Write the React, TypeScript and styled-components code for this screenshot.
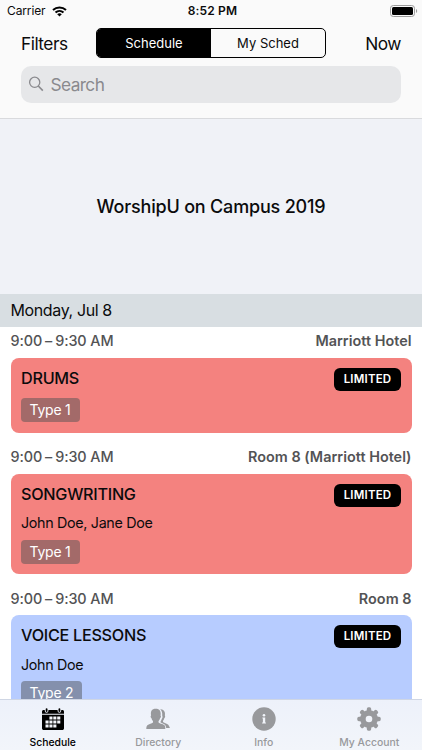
import React from 'react';
import styled, { createGlobalStyle } from 'styled-components';

const GlobalStyle = createGlobalStyle`
  * { box-sizing: border-box; }
  html, body { margin: 0; padding: 0; overflow: hidden; }
  body { font-family: Inter, 'Liberation Sans', sans-serif; color: #0b0b0c; background: #fff; }
  button { font: inherit; border: 0; background: none; padding: 0; color: inherit; }
`;

const Screen = styled.div`
  width: 422px;
  height: 750px;
  overflow: hidden;
  display: flex;
  flex-direction: column;
  background: #fff;
  position: relative;
`;

const Header = styled.header`
  flex: none;
  height: 119px;
  background: #fafafa;
  border-bottom: 1px solid #d9dadd;
`;

const StatusBar = styled.div`
  height: 22px;
  padding: 0 4px 0 7px;
  display: grid;
  grid-template-columns: 1fr auto 1fr;
  align-items: center;
`;

const Carrier = styled.div`
  display: flex;
  align-items: center;
  gap: 6px;
  font-size: 12px;
  line-height: 22px;
  letter-spacing: -0.12px;
`;

const Clock = styled.div`
  font-size: 12px;
  font-weight: 600;
  line-height: 22px;
  letter-spacing: 0.15px;
`;

const Battery = styled.svg`
  justify-self: end;
  display: block;
`;

const NavRow = styled.div`
  height: 30px;
  margin-top: 6px;
  padding: 0 21px;
  display: flex;
  align-items: center;
  justify-content: space-between;
`;

const NavButton = styled.button<{ $end?: boolean }>`
  width: 75px;
  padding-top: 1px;
  text-align: ${(p) => (p.$end ? 'right' : 'left')};
  font-size: 17.3px;
  line-height: 30px;
  letter-spacing: -0.5px;
`;

const Segments = styled.div`
  width: 230px;
  height: 30px;
  display: flex;
  border: 1px solid #000;
  border-radius: 5px;
  overflow: hidden;
`;

const Segment = styled.button<{ $active?: boolean }>`
  flex: 1;
  font-size: 13px;
  line-height: 28px;
  color: ${(p) => (p.$active ? '#fff' : '#0b0b0c')};
  background: ${(p) => (p.$active ? '#000' : 'transparent')};
`;

const SearchField = styled.div`
  height: 37px;
  margin: 8px 21px 0;
  padding: 0 8px 1px 7px;
  border-radius: 10px;
  background: #e6e7e9;
  color: #8a8a8e;
  display: flex;
  align-items: center;
  gap: 6.5px;
  font-size: 17.3px;
  letter-spacing: -0.6px;
`;

const Hero = styled.section`
  flex: none;
  height: 175px;
  background: #f0f2f7;
  display: flex;
  align-items: center;
  justify-content: center;
`;

const HeroTitle = styled.h1`
  margin: 0;
  font-size: 18px;
  font-weight: 500;
  letter-spacing: -0.19px;
`;

const DayHeader = styled.h2`
  flex: none;
  height: 33px;
  margin: 0;
  padding: 0 10.5px;
  background: #d8dee2;
  font-size: 16px;
  font-weight: 400;
  line-height: 33px;
  letter-spacing: -0.38px;
`;

const Entry = styled.article`
  flex: none;
  padding: 0 10.5px 10.5px;
`;

const EntryMeta = styled.div`
  height: 30.5px;
  display: flex;
  justify-content: space-between;
  color: #535355;
  font-size: 14.4px;
  font-weight: 500;
  line-height: 28px;
`;

const TimeRange = styled.span`
  letter-spacing: -0.1px;
`;

const Dash = styled.span`
  margin: 0 3px;
`;

const Place = styled.span`
  font-weight: 600;
  letter-spacing: 0.02px;
`;

const Card = styled.div<{ $color: string }>`
  padding: 10px 10.5px 10.5px;
  border-radius: 8px;
  background: ${(p) => p.$color};
`;

const CardTop = styled.div`
  height: 30.5px;
  display: flex;
  justify-content: space-between;
  align-items: flex-start;
`;

const CardTitle = styled.h3`
  margin: 0;
  font-size: 16.2px;
  font-weight: 500;
  line-height: 21px;
  letter-spacing: -0.27px;
`;

const Badge = styled.span`
  width: 67px;
  height: 23px;
  border-radius: 6px;
  background: #000;
  color: #fff;
  font-size: 11.5px;
  font-weight: 600;
  line-height: 22px;
  letter-spacing: 0.2px;
  text-align: center;
`;

const Speakers = styled.p`
  margin: 0 0 7px;
  font-size: 14.3px;
  line-height: 18.5px;
  letter-spacing: -0.32px;
`;

const Tag = styled.span<{ $color: string }>`
  display: block;
  width: fit-content;
  height: 24px;
  padding: 0 9px 0 8.5px;
  border-radius: 4px;
  background: ${(p) => p.$color};
  color: #fff;
  font-size: 14px;
  line-height: 24px;
  letter-spacing: -0.22px;
`;

const TabBar = styled.nav`
  position: absolute;
  inset: auto 0 0;
  height: 51px;
  border-top: 1px solid #cfd6e4;
  background: linear-gradient(#edf1fa, #f2f5fa);
  display: grid;
  grid-template-columns: repeat(4, 1fr);
`;

const Tab = styled.button<{ $active?: boolean }>`
  padding-top: 7px;
  display: flex;
  flex-direction: column;
  align-items: center;
  gap: 5px;
  color: ${(p) => (p.$active ? '#000' : '#98999c')};
  font-size: 10.4px;
  font-weight: 500;
  line-height: 14px;

  svg { display: block; }
`;

const WifiIcon = () => (
  <svg width="15" height="11" viewBox="0 0 15 11" fill="none" stroke="#000" strokeWidth="2">
    <path d="M1 4.1C4.7.6 10.3.6 14 4.1" />
    <path d="M3.5 6.6C5.8 4.5 9.2 4.5 11.5 6.6" />
    <path d="M7.5 10.6 5.2 8.2C6.5 7 8.5 7 9.8 8.2Z" fill="#000" stroke="none" />
  </svg>
);

const BatteryIcon = () => (
  <Battery width="28" height="12" viewBox="0 0 28 12">
    <rect x=".5" y=".5" width="24" height="11" rx="2.8" fill="none" stroke="#9c9c9c" />
    <rect x="2" y="2" width="21" height="8" rx="1.5" />
    <path d="M26 4c1.6.6 1.6 3.4 0 4Z" fill="#9c9c9c" />
  </Battery>
);

const SearchIcon = () => (
  <svg width="16" height="16" viewBox="0 0 16 16" fill="none" stroke="#8a8a8e" strokeWidth="1.3">
    <circle cx="6.7" cy="6.3" r="5.1" />
    <path d="m10.3 10 4.5 4.6" strokeWidth="1.6" />
  </svg>
);

const CalendarIcon = () => (
  <svg width="24" height="24" viewBox="0 0 24 24">
    <path d="M1 4.7c0-.9.7-1.6 1.6-1.6h1.2v.9a1.8 1.8 0 0 0 3.6 0v-.9h9.2v.9a1.8 1.8 0 0 0 3.6 0v-.9h1.2c.9 0 1.6.7 1.6 1.6v2H1Z" />
    <path d="M1 7.7h22v13.5c0 1-.8 1.8-1.8 1.8H2.8c-1 0-1.8-.8-1.8-1.8Z" />
    <rect x="4.7" y="1.2" width="1.8" height="3.8" rx=".9" />
    <rect x="17.5" y="1.2" width="1.8" height="3.8" rx=".9" />
    <path
      fill="#f4f6fb"
      d="M8.4 9.6h3.1v3H8.4zM12.3 9.6h3.1v3h-3.1zM16.2 9.6h3.1v3h-3.1zM4.5 13.5h3.1v3H4.5zM8.4 13.5h3.1v3H8.4zM12.3 13.5h3.1v3h-3.1zM16.2 13.5h3.1v3h-3.1zM4.5 17.4h3.1v3H4.5zM8.4 17.4h3.1v3H8.4zM12.3 17.4h3.1v3h-3.1z"
    />
  </svg>
);

const PeopleIcon = () => (
  <svg width="24" height="24" viewBox="0 0 24 24" fill="#98999c">
    <path d="M9.7 1.8c3.2 0 5.1 1.900 5 5 0 .7-.1 1.300-.2 1.800.7.200.6 2-.4 2.700-.3 1.200-.8 2-1.500 2.800-.3.900 0 1.700.6 2 2.700 1.200 5.600 1.600 5.900 3.300.2.900.2 1.800.2 2.700H.3c0-1 0-1.900.3-2.700.5-1.600 3.200-2 5.700-3.300.7-.4.9-1.200.6-2-.7-.8-1.200-1.600-1.400-2.800-1.100-.7-1.100-2.500-.4-2.700C4.300 4.200 5.800 1.800 9.700 1.800Z" />
    <path d="M14.200 2.200c3 0 4.900 1.700 4.800 4.600 0 .6-.1 1.200-.2 1.700.6.2.5 1.800-.4 2.600-.3 1-.7 1.900-1.300 2.600-.3.900.1 1.500.7 1.900 2.200 1.200 4.700 1.700 5.200 3.300.3.700.8 1.400.9 2.200h-3.700c-.3-2.700-.9-3.500-3.500-4.600-1.200-.5-2.200-.8-2.200-1.400 0-.5.9-1.700 1.200-3 .8-.9 1.100-2.400.5-3.600.3-2.600-.3-4.900-2-6.300Z" />
  </svg>
);

const InfoIcon = () => (
  <svg width="24" height="24" viewBox="0 0 24 24">
    <circle cx="12" cy="12" r="11.7" fill="#98999c" />
    <circle cx="12" cy="8.2" r="1.3" fill="#f1f4fa" />
    <path fill="#f1f4fa" d="M10.4 10.4h2.8v5.2h.7v1h-3.800v-1h.8v-4.200h-.5Z" />
  </svg>
);

const GearIcon = () => (
  <svg width="24" height="24" viewBox="0 0 24 24">
    <g fill="#98999c">
      {[0, 45, 90, 135].map((angle) => (
        <rect key={angle} x="9.8" y=".3" width="4.4" height="23.4" rx="1.6" transform={`rotate(${angle} 12 12)`} />
      ))}
      <circle cx="12" cy="12" r="8.9" />
    </g>
    <circle cx="12" cy="12" r="3.3" fill="#f1f4fa" />
  </svg>
);

interface Session {
  title: string;
  place: string;
  speakers?: string;
  type: string;
  color: string;
  tagColor: string;
}

const sessions: Session[] = [
  { title: 'DRUMS', place: 'Marriott Hotel', type: 'Type 1', color: '#f4827f', tagColor: '#a36a69' },
  {
    title: 'SONGWRITING',
    place: 'Room 8 (Marriott Hotel)',
    speakers: 'John Doe, Jane Doe',
    type: 'Type 1',
    color: '#f4827f',
    tagColor: '#a36a69',
  },
  {
    title: 'VOICE LESSONS',
    place: 'Room 8',
    speakers: 'John Doe',
    type: 'Type 2',
    color: '#b7ccff',
    tagColor: '#8490ac',
  },
];

const tabs = [
  { label: 'Schedule', Icon: CalendarIcon },
  { label: 'Directory', Icon: PeopleIcon },
  { label: 'Info', Icon: InfoIcon },
  { label: 'My Account', Icon: GearIcon },
];

export default function App() {
  return (
    <Screen>
      <GlobalStyle />
      <Header>
        <StatusBar>
          <Carrier>
            Carrier
            <WifiIcon />
          </Carrier>
          <Clock>8:52 PM</Clock>
          <BatteryIcon />
        </StatusBar>
        <NavRow>
          <NavButton>Filters</NavButton>
          <Segments>
            <Segment $active>Schedule</Segment>
            <Segment>My Sched</Segment>
          </Segments>
          <NavButton $end>Now</NavButton>
        </NavRow>
        <SearchField>
          <SearchIcon />
          Search
        </SearchField>
      </Header>
      <Hero>
        <HeroTitle>WorshipU on Campus 2019</HeroTitle>
      </Hero>
      <DayHeader>Monday, Jul 8</DayHeader>
      {sessions.map((s) => (
        <Entry key={s.title}>
          <EntryMeta>
            <TimeRange>
              9:00<Dash>–</Dash>9:30 AM
            </TimeRange>
            <Place>{s.place}</Place>
          </EntryMeta>
          <Card $color={s.color}>
            <CardTop>
              <CardTitle>{s.title}</CardTitle>
              <Badge>LIMITED</Badge>
            </CardTop>
            {s.speakers && <Speakers>{s.speakers}</Speakers>}
            <Tag $color={s.tagColor}>{s.type}</Tag>
          </Card>
        </Entry>
      ))}
      <TabBar>
        {tabs.map(({ label, Icon }, i) => (
          <Tab key={label} $active={i === 0}>
            <Icon />
            {label}
          </Tab>
        ))}
      </TabBar>
    </Screen>
  );
}
